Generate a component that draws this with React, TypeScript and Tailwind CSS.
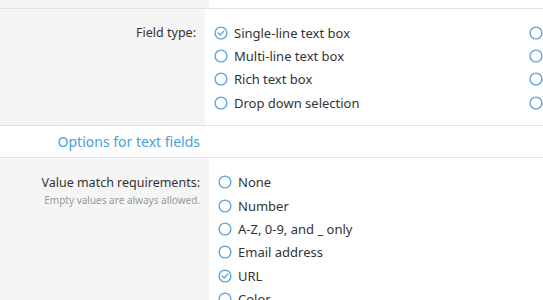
import React from "react";

const Radio: React.FC<{ checked?: boolean }> = ({ checked }) => (
  <svg width="14" height="14" viewBox="0 0 14 14" className="shrink-0">
    <circle cx="7" cy="7" r="5.9" fill="none" stroke="#62a5d9" strokeWidth="1.4" />
    {checked && (
      <path
        d="M4.3 7.1 L6.2 9 L9.8 5.2"
        fill="none"
        stroke="#62a5d9"
        strokeWidth="1.4"
        strokeLinecap="round"
        strokeLinejoin="round"
      />
    )}
  </svg>
);

const Option: React.FC<{ label?: string; checked?: boolean }> = ({ label, checked }) => (
  <div className="h-[23.33px] flex items-center gap-[6px]">
    <Radio checked={checked} />
    {label && <span className="text-[13px] leading-[18px] text-[#333]">{label}</span>}
  </div>
);

const fieldTypes = [
  { label: "Single-line text box", checked: true },
  { label: "Multi-line text box" },
  { label: "Rich text box" },
  { label: "Drop down selection" },
];

const matchTypes = [
  { label: "None" },
  { label: "Number" },
  { label: "A-Z, 0-9, and _ only" },
  { label: "Email address" },
  { label: "URL", checked: true },
  { label: "Color" },
];

export default function App() {
  return (
    <div className="w-[543px] h-[300px] overflow-hidden bg-white font-['Noto_Sans',sans-serif] text-[#333]">
      {/* previous row */}
      <div className="flex h-[9px] border-b border-[#e2e2e2]">
        <div className="w-[209px] bg-[#f5f5f5]" />
        <div className="flex-1" />
      </div>

      {/* Field type */}
      <div className="flex border-b border-[#e2e2e2]">
        <div className="w-[209px] bg-[#f5f5f5] pr-[9px] pt-[12px] text-right">
          <div className="h-[23.33px] leading-[23.33px] text-[12.5px]">Field type:</div>
        </div>
        <div className="flex-1 grid grid-cols-[315px_1fr] pl-[9px] pt-[12px] pb-[11px]">
          <div>
            {fieldTypes.map((o) => (
              <Option key={o.label} label={o.label} checked={o.checked} />
            ))}
          </div>
          <div>
            {fieldTypes.map((o) => (
              <Option key={o.label} />
            ))}
          </div>
        </div>
      </div>

      {/* section header */}
      <div className="flex h-[32px] border-b border-[#e2e2e2]">
        <div className="w-[209px] pr-[9px] flex items-center justify-end">
          <span className="text-[14px] text-[#4a9fd9]">Options for text fields</span>
        </div>
      </div>

      {/* Value match */}
      <div className="flex">
        <div className="w-[209px] bg-[#f5f5f5] pr-[9px] pt-[12.5px] text-right">
          <div className="h-[23.33px] leading-[23.33px] text-[12.5px]">Value match requirements:</div>
          <div className="text-[10px] leading-[12px] text-[#999]">Empty values are always allowed.</div>
        </div>
        <div className="flex-1 pl-[9px] pt-[12.5px]">
          {matchTypes.map((o) => (
            <Option key={o.label} label={o.label} checked={o.checked} />
          ))}
        </div>
      </div>
    </div>
  );
}
